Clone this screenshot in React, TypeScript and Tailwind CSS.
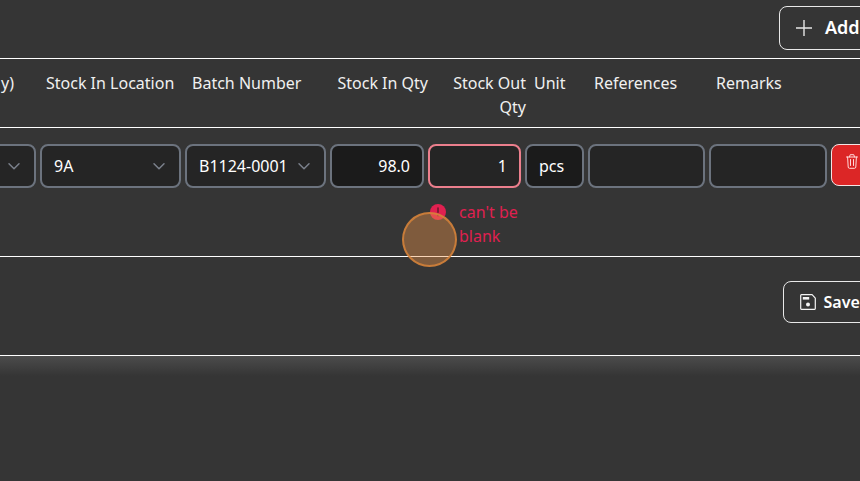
import React from 'react';

const fieldBase =
  'flex h-11 shrink-0 items-center rounded-lg border-2 px-3 text-white';

function Field({ className, children }: { className: string; children?: React.ReactNode }) {
  return <div className={`${fieldBase} ${className}`}>{children}</div>;
}

function Chevron() {
  return (
    <svg className="h-5 w-5 shrink-0" viewBox="0 0 20 20" fill="none" stroke="#7b818c" strokeWidth="1.5" strokeLinecap="round" strokeLinejoin="round">
      <path d="M5 7.7l5 5 5-5" />
    </svg>
  );
}

function PlusIcon() {
  return (
    <svg className="h-4 w-4 shrink-0" viewBox="0 0 16 16" fill="none" stroke="#e6e6e6" strokeWidth="1.4">
      <path d="M8 0v16M0 8h16" />
    </svg>
  );
}

function SaveIcon() {
  return (
    <svg className="h-4 w-4 shrink-0" viewBox="0 0 16 16" fill="none" stroke="#f4f4f4" strokeWidth="1.2" strokeLinejoin="round">
      <path d="M.7 1.4Q.7.7 1.4.7h10.7l3.2 3.4v10.5q0 .7-.7.7H1.4q-.7 0-.7-.7z" />
      <path d="M2.8 3h6.4v2.6H2.8z" fill="#f4f4f4" stroke="none" />
      <circle cx="8" cy="10.6" r="2" fill="#f4f4f4" stroke="none" />
    </svg>
  );
}

function TrashIcon() {
  return (
    <svg className="h-[15px] w-3 shrink-0" viewBox="0 0 12 15" fill="none" stroke="#ffd9d9" strokeWidth="1" strokeLinecap="round" strokeLinejoin="round">
      <path d="M.5 3h11M3.5 3l.7-2.3h3.6L8.5 3M1.6 3l.6 10q.1 1.3 1.2 1.3h5.2q1.1 0 1.2-1.3l.6-10M4.5 5.5v6M7.5 5.5v6" />
    </svg>
  );
}

function ErrorIcon() {
  return (
    <svg className="mt-1 h-4 w-4 shrink-0" viewBox="0 0 16 16">
      <circle cx="8" cy="8" r="8" fill="#e02050" />
      <path d="M8 4v4.3" stroke="#6d1a2e" strokeWidth="1.6" strokeLinecap="round" />
      <circle cx="8" cy="11.4" r="0.9" fill="#6d1a2e" />
    </svg>
  );
}

export default function App() {
  return (
    <div className="relative flex h-[481px] w-[860px] flex-col overflow-hidden bg-[#353535] font-['Noto_Sans','Open_Sans',sans-serif] text-base text-[#f0f0f0]">
      <div className="flex h-[59px] shrink-0 items-start justify-end border-b border-white pt-1.5">
        <button className="-mr-5 flex h-11 w-[101px] shrink-0 items-center gap-[13px] whitespace-nowrap rounded-lg border border-[#e8e8e8] pl-4 text-lg font-semibold text-white">
          <PlusIcon />
          <span className="-mt-0.5">Add</span>
        </button>
      </div>

      <div className="flex h-[69px] shrink-0 border-b border-white pt-3">
        <div className="w-[46px] shrink-0 pl-px">y)</div>
        <div className="w-[146px] shrink-0 whitespace-nowrap">Stock In Location</div>
        <div className="w-[136px] shrink-0 whitespace-nowrap">Batch Number</div>
        <div className="w-[100px] shrink-0 whitespace-nowrap text-right">Stock In Qty</div>
        <div className="w-[98px] shrink-0 pl-4 text-right">Stock Out Qty</div>
        <div className="w-[68px] shrink-0 pl-2">Unit</div>
        <div className="w-[122px] shrink-0">References</div>
        <div className="shrink-0">Remarks</div>
      </div>

      <div className="h-[129px] shrink-0 border-b border-white pt-4">
        <div className="flex gap-1">
          <Field className="-ml-3 w-12 justify-end border-[#6c737e] bg-[#252525] !pr-2.5">
            <Chevron />
          </Field>
          <Field className="w-[141px] justify-between border-[#6c737e] bg-[#252525] !pr-2.5">
            <span>9A</span>
            <Chevron />
          </Field>
          <Field className="w-[141px] justify-between border-[#6c737e] bg-[#252525] !pr-2.5">
            <span>B1124-0001</span>
            <Chevron />
          </Field>
          <Field className="w-[94px] justify-end border-[#6c737e] bg-[#1b1b1b]">98.0</Field>
          <Field className="w-[93px] justify-end border-[#ec7f8d] bg-[#252525]">1</Field>
          <Field className="w-[59px] border-[#6c737e] bg-[#1b1b1b]">pcs</Field>
          <Field className="w-[117px] border-[#6c737e] bg-[#252525]" />
          <Field className="w-[118px] border-[#6c737e] bg-[#252525]" />
          <button className="flex h-[42px] w-16 shrink-0 items-start rounded-lg border border-[#f3e4e4] bg-[#dc2626] pl-3.5 pt-[9px]">
            <TrashIcon />
          </button>
        </div>
        <div className="ml-[430px] mt-3 flex w-24 gap-[13px] text-[#e02050]">
          <ErrorIcon />
          <p>can't be blank</p>
        </div>
      </div>

      <div className="flex h-[99px] shrink-0 items-start justify-end border-b border-white pt-6">
        <button className="-mr-5 flex h-[42px] w-[97px] shrink-0 items-center gap-2 whitespace-nowrap rounded-lg border border-[#e8e8e8] pl-[15.5px] font-semibold text-white">
          <SaveIcon />
          <span>Save</span>
        </button>
      </div>
      <div className="h-5 shrink-0 bg-gradient-to-b from-[#4c4c4c] to-[#353535]" />

      <div className="absolute left-[402px] top-[212px] h-[55px] w-[55px] rounded-full border-2 border-[#d6823a]/85 bg-[#f0954a]/40" />
    </div>
  );
}
